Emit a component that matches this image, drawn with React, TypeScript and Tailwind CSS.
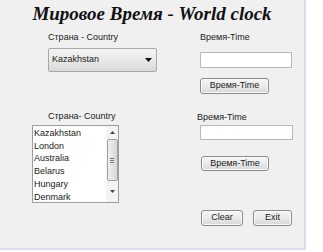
import { useState } from "react";

const COUNTRIES = ["Kazakhstan", "London", "Australia", "Belarus", "Hungary", "Denmark"];

const UI = "font-['Liberation_Sans',Arial,sans-serif] text-[9px] text-[#1a1a1a]";

const WinButton = ({ label, className = "" }: { label: string; className?: string }) => (
  <button
    className={`flex items-center justify-center rounded-[3px] border border-[#8a8a8a] bg-gradient-to-b from-[#f4f4f4] via-[#ebebeb] to-[#d6d6d6] shadow-[inset_0_0_0_1px_#fcfcfc] ${className}`}
  >
    {label}
  </button>
);

const TextBox = ({ className = "" }: { className?: string }) => (
  <div className={`border border-[#b5b8c0] bg-white ${className}`} />
);

const App = () => {
  const [country] = useState("Kazakhstan");

  return (
    <div className={`h-[252px] w-[323px] bg-white ${UI}`}>
      <div className="h-[250px] w-[306px] border-r-2 border-b-2 border-[#dcdcf7] bg-[#f0f0f0]">
        {/* Title */}
        <h1 className="h-[28px] pt-[2px] text-center font-['Liberation_Serif','Times_New_Roman',serif] text-[19px] font-bold italic leading-[24px] text-[#111]">
          Мировое Время - World clock
        </h1>

        <div className="flex">
          {/* Left column */}
          <div className="w-[200px]">
            <p className="ml-[48px] mt-[4px] leading-[11px]">Страна - Country</p>
            <div className="ml-[48px] mt-[5px] flex h-[24px] w-[109px] items-center justify-between rounded-[2px] border border-[#a8a8a8] bg-gradient-to-b from-[#f3f3f3] via-[#e9e9e9] to-[#d9d9d9] pl-[3px] pr-[4px]">
              <span>{country}</span>
              <svg width="7" height="4" viewBox="0 0 7 4">
                <path d="M0 0h7L3.5 4z" fill="#111" />
              </svg>
            </div>

            <p className="ml-[48px] mt-[39px] leading-[11px]">Страна- Country</p>
            <div className="ml-[32px] mt-[3px] flex h-[78px] w-[87px] border border-[#9c9c9c] bg-white">
              <ul className="flex-1 pl-[1px] pt-[1px] leading-[12.7px]">
                {COUNTRIES.map(c => (
                  <li key={c}>{c}</li>
                ))}
              </ul>
              {/* scrollbar */}
              <div className="flex w-[12px] flex-col items-center bg-[#f4f4f4]">
                <div className="flex h-[13px] items-center">
                  <svg width="5" height="3" viewBox="0 0 5 3">
                    <path d="M0 3h5L2.5 0z" fill="#444" />
                  </svg>
                </div>
                <div className="flex h-[42px] w-[11px] items-center justify-center rounded-[2px] border border-[#a0a0a0] bg-gradient-to-r from-[#efefef] to-[#d8d8d8]">
                  <div className="flex flex-col gap-[1px]">
                    <span className="h-px w-[4px] bg-[#777]" />
                    <span className="h-px w-[4px] bg-[#777]" />
                    <span className="h-px w-[4px] bg-[#777]" />
                  </div>
                </div>
                <div className="flex flex-1 items-center">
                  <svg width="5" height="3" viewBox="0 0 5 3">
                    <path d="M0 0h5L2.5 3z" fill="#444" />
                  </svg>
                </div>
              </div>
            </div>
          </div>

          {/* Right column */}
          <div className="flex flex-col">
            <p className="mt-[4px] leading-[11px]">Время-Time</p>
            <TextBox className="mt-[9px] h-[16px] w-[92px]" />
            <WinButton label="Время-Time" className="mt-[10px] h-[16px] w-[69px]" />

            <p className="ml-[-3px] mt-[18px] leading-[11px]">Время-Time</p>
            <TextBox className="mt-[2px] h-[15px] w-[93px]" />
            <WinButton label="Время-Time" className="ml-[1px] mt-[16px] h-[15px] w-[68px]" />

            <div className="ml-[1px] mt-[39px] flex gap-[10px]">
              <WinButton label="Clear" className="h-[16px] w-[42px]" />
              <WinButton label="Exit" className="h-[16px] w-[39px]" />
            </div>
          </div>
        </div>
      </div>
    </div>
  );
};

export default App;
